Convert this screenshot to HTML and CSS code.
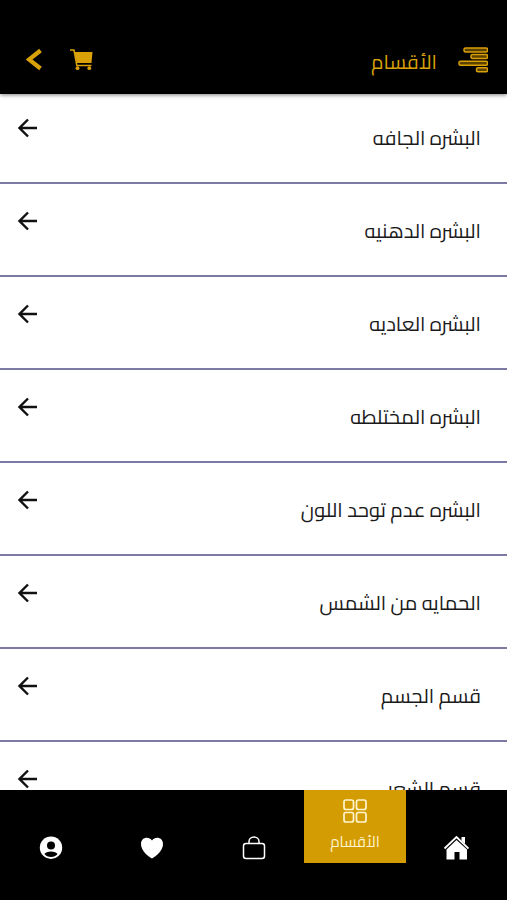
FILE: index.html
```html
<!DOCTYPE html>
<html lang="ar" dir="rtl">
<head>
<meta charset="utf-8">
<meta name="viewport" content="width=device-width, initial-scale=1">
<title>الأقسام</title>
<link rel="stylesheet" href="styles.css">
</head>
<body>
<header class="topbar">
  <button class="icon-button" type="button" aria-label="القائمة">
    <svg class="menu-icon" width="30" height="28" viewBox="0 0 30 28"><rect x="6" y="2" width="23.500" height="4" rx="1.500"/><rect x="13" y="8.600" width="16.500" height="4" rx="1.500"/><rect x="1" y="15.200" width="28.500" height="4" rx="1.500"/><rect x="18.500" y="21.800" width="11" height="4" rx="1.500"/></svg>
  </button>
  <h1 class="title">الأقسام</h1>
  <button class="icon-button" type="button" aria-label="السلة">
    <svg width="24" height="24" viewBox="0 0 24 24"><path d="M0 2H4L6.800 17.500H21.500" fill="none" stroke="#d9a008" stroke-width="1.500"/><path d="M4.500 4H22.500L21.500 15H6.800Z" fill="#d9a008"/><circle cx="7.500" cy="20.200" r="1.900" fill="#d9a008"/><circle cx="19.300" cy="20.200" r="1.900" fill="#d9a008"/></svg>
  </button>
  <button class="icon-button back" type="button" aria-label="رجوع">
    <svg width="18" height="24" viewBox="0 0 18 24"><path d="M14.500 2.500 3 11.500 14.500 20.500" fill="none" stroke="#d9a008" stroke-width="4.200"/></svg>
  </button>
</header>

<main class="content">
  <ul class="list">
    <li><a class="row" href="#"><span class="label">البشره الجافه</span><svg class="arrow" viewBox="0 0 20 20"><path d="M19 10H2M10 1.500 1.500 10 10 18.500"/></svg></a></li>
    <li><a class="row" href="#"><span class="label">البشره الدهنيه</span><svg class="arrow" viewBox="0 0 20 20"><path d="M19 10H2M10 1.500 1.500 10 10 18.500"/></svg></a></li>
    <li><a class="row" href="#"><span class="label">البشره العاديه</span><svg class="arrow" viewBox="0 0 20 20"><path d="M19 10H2M10 1.500 1.500 10 10 18.500"/></svg></a></li>
    <li><a class="row" href="#"><span class="label">البشره المختلطه</span><svg class="arrow" viewBox="0 0 20 20"><path d="M19 10H2M10 1.500 1.500 10 10 18.500"/></svg></a></li>
    <li><a class="row" href="#"><span class="label">البشره عدم توحد اللون</span><svg class="arrow" viewBox="0 0 20 20"><path d="M19 10H2M10 1.500 1.500 10 10 18.500"/></svg></a></li>
    <li><a class="row" href="#"><span class="label">الحمايه من الشمس</span><svg class="arrow" viewBox="0 0 20 20"><path d="M19 10H2M10 1.500 1.500 10 10 18.500"/></svg></a></li>
    <li><a class="row" href="#"><span class="label">قسم الجسم</span><svg class="arrow" viewBox="0 0 20 20"><path d="M19 10H2M10 1.500 1.500 10 10 18.500"/></svg></a></li>
    <li><a class="row" href="#"><span class="label">قسم الشعر</span><svg class="arrow" viewBox="0 0 20 20"><path d="M19 10H2M10 1.500 1.500 10 10 18.500"/></svg></a></li>
  </ul>
</main>

<nav class="tabs">
  <a class="tab" href="#" aria-label="الرئيسية">
    <svg width="26" height="26" viewBox="0 0 26 26" fill="#fff"><path d="M1.500 13.500 13.500 2 25.500 13.500" fill="none" stroke="#fff" stroke-width="1.800"/><path d="M18.500 2H22V9L18.500 5.700Z"/><path d="M13.500 5 24 14.500V24.500H16.500V17H11.500V24.500H3.500V14.500Z"/></svg>
  </a>
  <a class="tab active" href="#" aria-current="page">
    <svg width="26" height="26" viewBox="0 0 26 26"><g fill="none" stroke="#fff4cf" stroke-width="1.700"><rect x="2" y="2" width="9.500" height="9.500" rx="2"/><rect x="14.500" y="2" width="9.500" height="9.500" rx="2"/><rect x="2" y="14.500" width="9.500" height="9.500" rx="2"/><rect x="14.500" y="14.500" width="9.500" height="9.500" rx="2"/></g></svg>
    <span>الأقسام</span>
  </a>
  <a class="tab" href="#" aria-label="الطلبات">
    <svg width="26" height="26" viewBox="0 0 26 26"><g fill="none" stroke="#fff" stroke-width="1.500"><rect x="2.500" y="8.500" width="21" height="15" rx="2.500"/><path d="M8 8.500V6.500A5 4.500 0 0 1 18 6.500V8.500"/></g></svg>
  </a>
  <a class="tab" href="#" aria-label="المفضلة">
    <svg width="26" height="26" viewBox="0 0 26 26"><path d="M13 23.500C9 21 2 16 2 9C2 2 10 1 13 5.500C16 1 24 2 24 9C24 16 17 21 13 23.500Z" fill="#fff"/></svg>
  </a>
  <a class="tab" href="#" aria-label="حسابي">
    <svg width="26" height="26" viewBox="0 0 26 26"><circle cx="13" cy="12.700" r="11.200" fill="#fff"/><circle cx="13" cy="10.500" r="4"/><path d="M6.500 19C8 15.500 18 15.500 19.500 19C17 23 9 23 6.500 19Z"/></svg>
  </a>
</nav>
</body>
</html>
```
FILE: styles.css
```css
* {
  box-sizing: border-box;
}

body {
  margin: 0;
  height: 100vh;
  display: flex;
  flex-direction: column;
  background: #fff;
  color: #1a1a1a;
  font-family: "Cairo", "DejaVu Sans", sans-serif;
}

.topbar {
  position: relative;
  z-index: 1;
  flex: none;
  display: flex;
  align-items: center;
  height: 94px;
  padding: 25px 19px 0 26px;
  background: #000;
  box-shadow: 0 1px 4px rgba(0, 0, 0, 0.5);
}

.icon-button {
  display: flex;
  padding: 0;
  border: 0;
  background: none;
  cursor: pointer;
}

.menu-icon {
  fill: #5c4200;
  stroke: #d9a008;
  stroke-width: 1.5;
}

.title {
  margin: 0 21px 0 auto;
  padding-top: 4px;
  color: #d9a008;
  font-size: 20px;
  font-weight: 400;
  line-height: 32px;
}

.back {
  margin-right: 26px;
}

.content {
  flex: 1;
  min-height: 0;
  overflow-y: auto;
  scrollbar-width: none;
  margin-top: -3px;
}

.list {
  margin: 0;
  padding: 0;
  list-style: none;
}

.row {
  display: flex;
  align-items: flex-start;
  justify-content: space-between;
  height: 93px;
  padding: 27px 26px 0 18px;
  border-bottom: 2px solid #7c7aa3;
  color: inherit;
  text-decoration: none;
}

.label {
  padding-top: 4px;
  font-size: 20px;
  line-height: 32px;
}

.arrow {
  width: 20px;
  height: 20px;
  fill: none;
  stroke: #111;
  stroke-width: 2.4;
}

.tabs {
  flex: none;
  display: grid;
  grid-template-columns: repeat(5, 1fr);
  align-items: start;
  height: 110px;
  background: #000;
}

.tab {
  display: flex;
  flex-direction: column;
  align-items: center;
  padding-top: 45px;
  color: #fff4cf;
  font-size: 15px;
  line-height: 24px;
  text-decoration: none;
}

.tab.active {
  height: 73px;
  padding-top: 8px;
  gap: 6px;
  background: #d39c02;
}
```
